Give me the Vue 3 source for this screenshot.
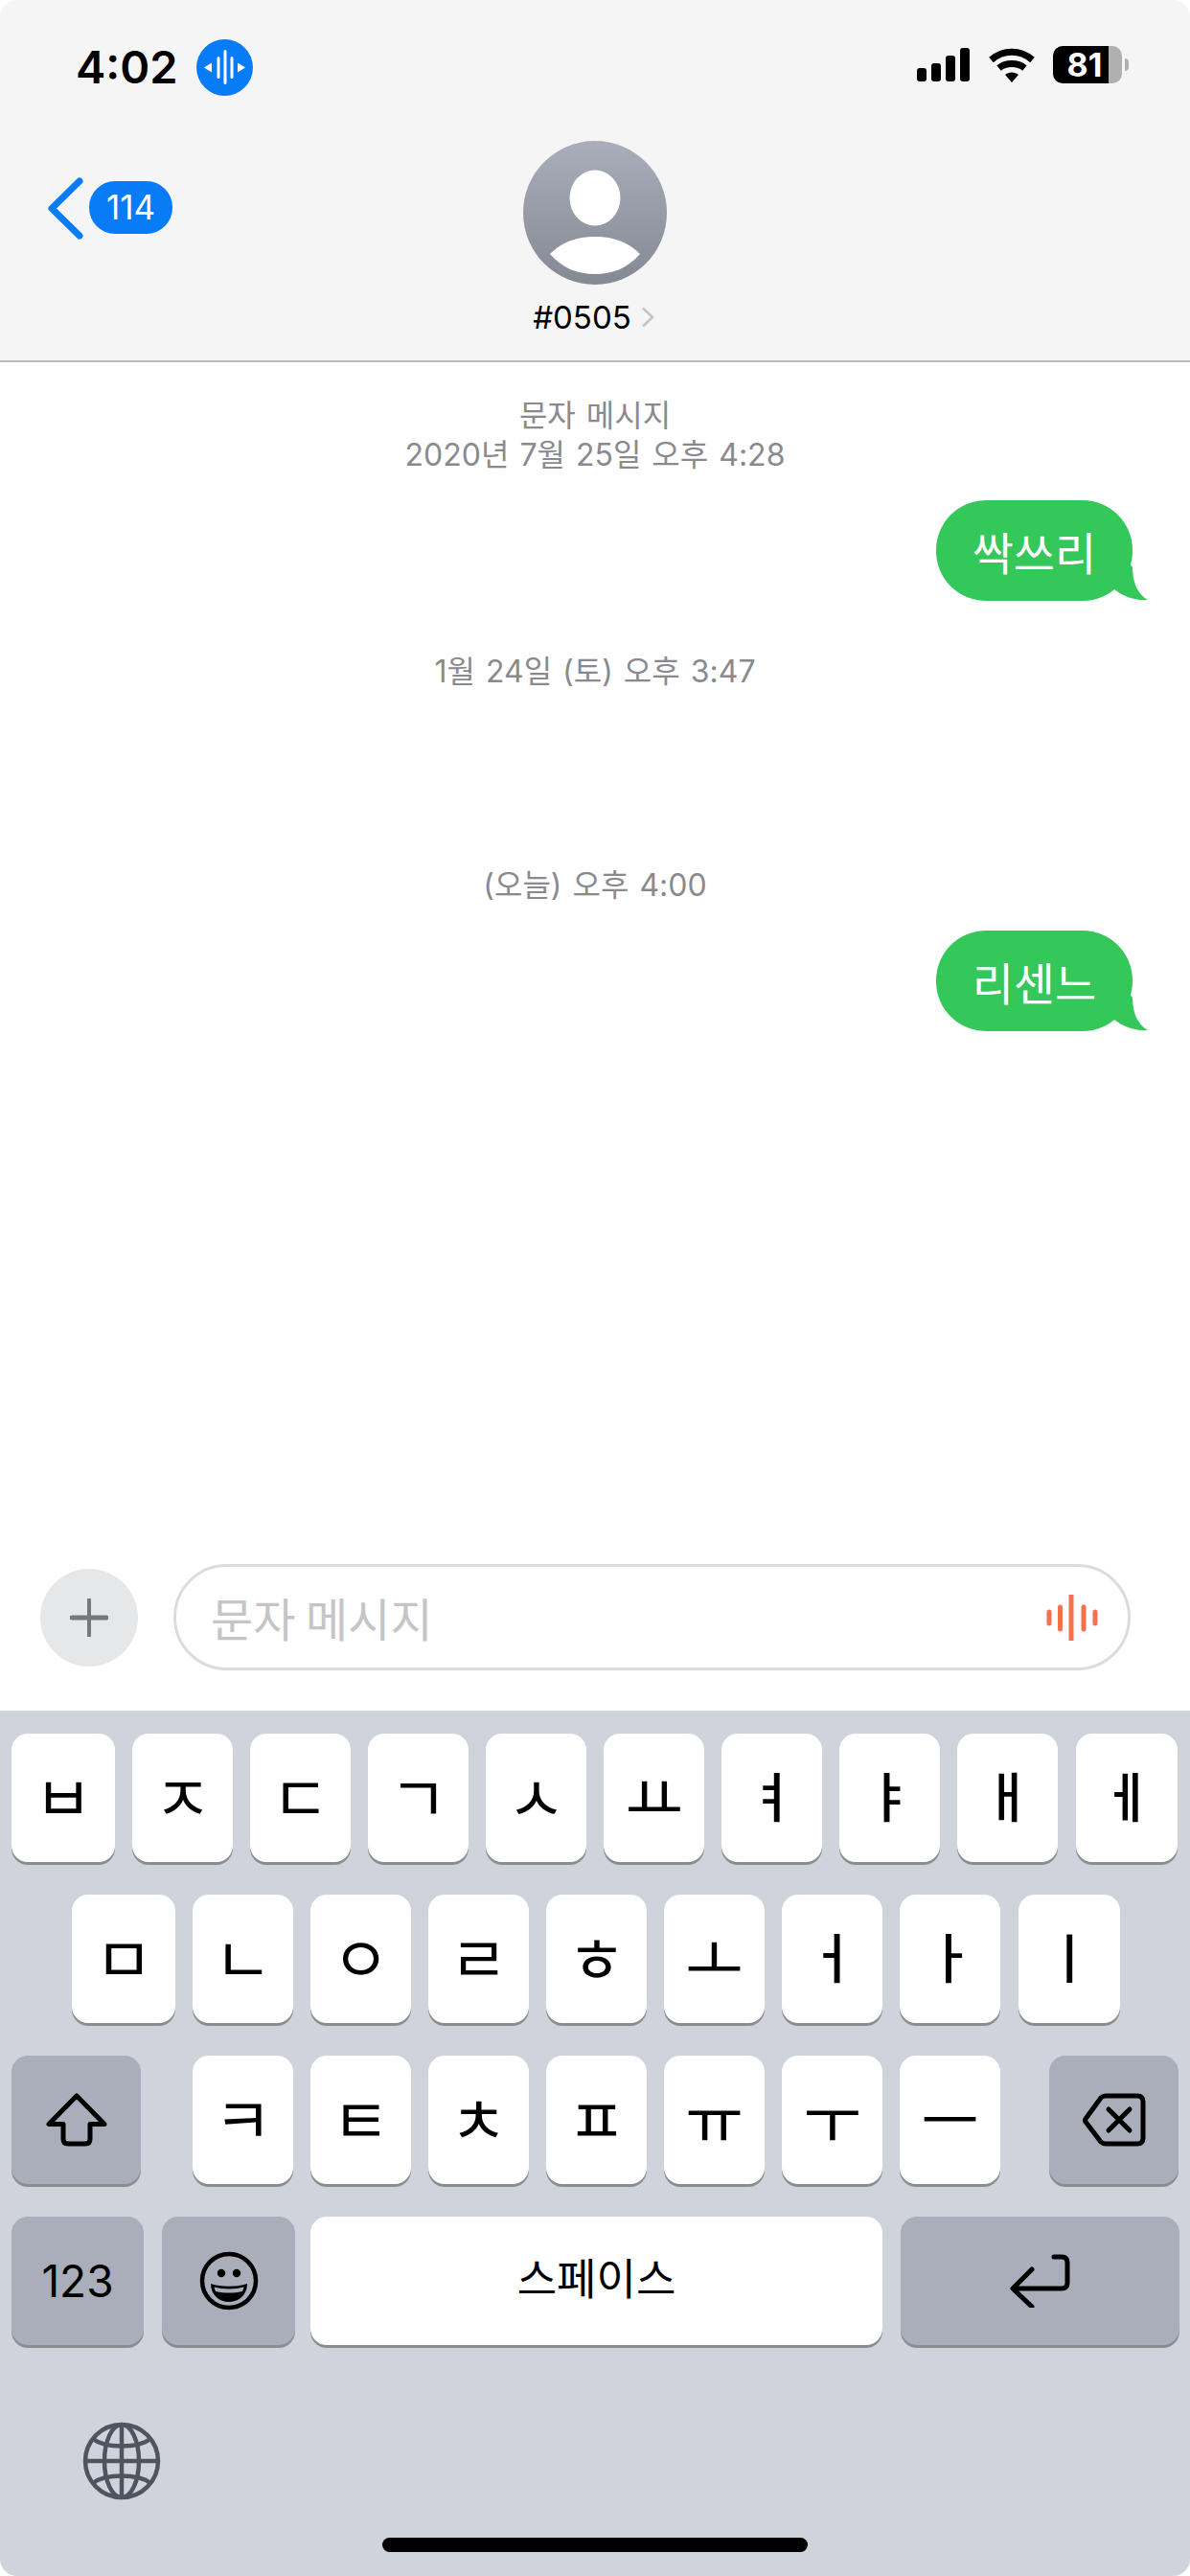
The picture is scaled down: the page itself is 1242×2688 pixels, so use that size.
<template>
  <div class="phone">
    <header class="top">
      <div class="status">
        <div class="status-left">
          <span class="clock">4:02</span>
          <svg class="voice" width="59" height="59" viewBox="0 0 59 59">
            <circle cx="29.5" cy="29.5" r="29.5" fill="#087cf6" />
            <path d="M16 24.5v10l-8-5z M43 24.5v10l8-5z" fill="#fff" />
            <path d="M23 19.5v20 M30 12.5v33 M37 19.5v20" stroke="#fff" stroke-width="3" stroke-linecap="round" />
          </svg>
        </div>
        <div class="status-right">
          <svg class="signal" width="55" height="35" viewBox="0 0 55 35">
            <rect x="0" y="21" width="10" height="14" rx="3" />
            <rect x="15" y="16" width="10" height="19" rx="3" />
            <rect x="30" y="8" width="10" height="27" rx="3" />
            <rect x="45" y="0" width="10" height="35" rx="3" />
          </svg>
          <svg class="wifi" width="48" height="37" viewBox="0 0 48 37">
            <path d="M2.5 13.5C15 2.5 33 2.5 45.500 13.500" fill="none" stroke="#000" stroke-width="7" />
            <path d="M10.500 22C18 16 30 16 37.500 22" fill="none" stroke="#000" stroke-width="7" />
            <path d="M17 29L24 37L31 29C27 25.500 21 25.500 17 29Z" />
          </svg>
          <div class="battery">
            <div class="battery-body">
              <span class="battery-num">81</span>
            </div>
            <i class="battery-cap"></i>
          </div>
        </div>
      </div>
      <div class="nav">
        <div class="back">
          <svg width="38" height="66" viewBox="0 0 38 66">
            <path d="M33 4L4 32.500L33 61" fill="none" stroke="#087cf6" stroke-width="7" stroke-linecap="round" stroke-linejoin="round" />
          </svg>
          <span class="badge">114</span>
        </div>
        <div class="contact">
          <svg class="avatar" width="150" height="150" viewBox="0 0 150 150">
            <defs>
              <linearGradient id="av" x1="0" y1="0" x2="0" y2="1">
                <stop offset="0" stop-color="#a9aeba" />
                <stop offset="1" stop-color="#858994" />
              </linearGradient>
            </defs>
            <circle cx="75" cy="75" r="75" fill="url(#av)" />
            <ellipse cx="75" cy="59.500" rx="26.500" ry="29" fill="#fff" />
            <path d="M28 118C42 104 58 100 75 100C92 100 108 104 122 118C109 133 93 139 75 139C57 139 41 133 28 118Z" fill="#fff" />
          </svg>
          <div class="contact-name">
            <span>#0505</span>
            <svg width="14" height="22" viewBox="0 0 14 22">
              <path d="M2 1.500L12 11L2 20.500" fill="none" stroke="#c4c4c6" stroke-width="2.500" />
            </svg>
          </div>
        </div>
        <div></div>
      </div>
    </header>

    <main class="thread">
      <template v-for="(item, i) in thread" :key="i">
        <div class="stamp" :class="item.cls">
          <div v-for="line in item.stamp" :key="line">{{ line }}</div>
        </div>
        <div v-if="item.text" class="bubble">
          <span>{{ item.text }}</span>
          <svg class="tail" width="60" height="60" viewBox="0 0 60 60">
            <path d="M40 20L44 25C44 40 49 53 60 59C46 60 34 55 25 48Z" fill="#34c759" />
          </svg>
        </div>
      </template>
    </main>

    <div class="composer">
      <div class="plus">
        <svg width="40" height="40" viewBox="0 0 40 40">
          <path d="M20 1v38" stroke="#77787d" stroke-width="4" stroke-linecap="round" />
          <path d="M2 20h36" stroke="#77787d" stroke-width="5" stroke-linecap="round" />
        </svg>
      </div>
      <div class="field">
        <span class="placeholder">문자 메시지</span>
        <svg class="wave" width="56" height="48" viewBox="0 0 56 48">
          <path d="M4 18v12 M15.500 13v23 M27 1v46 M40 13v23 M52 18v12" stroke="#f4714e" stroke-width="5" stroke-linecap="round" />
        </svg>
      </div>
    </div>

    <section class="keyboard">
      <div class="row row-1">
        <div v-for="k in row1" :key="k" class="key" :class="jamoClass(k)">{{ k }}</div>
      </div>
      <div class="row row-2">
        <div v-for="k in row2" :key="k" class="key" :class="jamoClass(k)">{{ k }}</div>
      </div>
      <div class="row row-3">
        <div class="key dark shift">
          <svg width="64" height="56" viewBox="0 0 64 56">
            <path d="M32 3L3 32.500H18V48Q18 53 23 53H41Q46 53 46 48V32.500H61Z" fill="none" stroke="#000" stroke-width="5" stroke-linejoin="round" />
          </svg>
        </div>
        <div v-for="k in row3" :key="k" class="key" :class="jamoClass(k)">{{ k }}</div>
        <div class="key dark del">
          <svg width="66" height="56" viewBox="0 0 66 56">
            <path d="M3 27L19 5Q21 3 24 3H57Q63 3 63 9V47Q63 53 57 53H24Q21 53 19 51L3 30Q2 28.500 3 27Z" fill="none" stroke="#000" stroke-width="5" stroke-linejoin="round" />
            <path d="M27 17L49 39 M49 17L27 39" stroke="#000" stroke-width="5" stroke-linecap="round" />
          </svg>
        </div>
      </div>
      <div class="row row-4">
        <div class="key dark num">123</div>
        <div class="key dark emoji">
          <svg width="62" height="62" viewBox="0 0 62 62">
            <circle cx="31" cy="31" r="28" fill="none" stroke="#000" stroke-width="4.500" />
            <circle cx="23" cy="23" r="4.200" />
            <circle cx="39" cy="23" r="4.200" />
            <path d="M12 34C22 37.500 40 37.500 50 34C50 46 41 53 31 53C21 53 12 46 12 34Z" />
            <path d="M15.500 37.500C25 40 37 40 46.500 37.500C46 40 45.500 41 44.800 42C36 44 26 44 17.200 42C16.500 41 16 40 15.500 37.500Z" fill="#a9aeba" />
          </svg>
        </div>
        <div class="key space"><span>스페이스</span></div>
        <div class="key dark enter">
          <svg width="64" height="56" viewBox="0 0 64 56">
            <path d="M46 3H54Q60 3 60 9V30Q60 36 54 36H4 M23 16L3 36L23 55" fill="none" stroke="#000" stroke-width="5" stroke-linecap="round" stroke-linejoin="round" />
          </svg>
        </div>
      </div>
      <svg class="globe" width="82" height="82" viewBox="0 0 82 82">
        <g fill="none" stroke="#50545e" stroke-width="4.500">
          <circle cx="41" cy="41" r="38" />
          <ellipse cx="41" cy="41" rx="18" ry="38" />
          <path d="M41 3v76 M3 41h76" />
          <path d="M11 18C24 28 58 28 71 18 M11 64C24 54 58 54 71 64" />
        </g>
      </svg>
      <div class="home-bar"></div>
    </section>
  </div>
</template>

<script setup>
// 말풍선 사이 빈 간격은 cls 로 조정
const thread = [
  { stamp: ['문자 메시지', '2020년 7월 25일 오후 4:28'], text: '싹쓰리', cls: 'first' },
  { stamp: ['1월 24일 (토) 오후 3:47'], cls: 'second' },
  { stamp: ['(오늘) 오후 4:00'], text: '리센느', cls: 'third' }
]

const row1 = ['ㅂ', 'ㅈ', 'ㄷ', 'ㄱ', 'ㅅ', 'ㅛ', 'ㅕ', 'ㅑ', 'ㅐ', 'ㅔ']
const row2 = ['ㅁ', 'ㄴ', 'ㅇ', 'ㄹ', 'ㅎ', 'ㅗ', 'ㅓ', 'ㅏ', 'ㅣ']
const row3 = ['ㅋ', 'ㅌ', 'ㅊ', 'ㅍ', 'ㅠ', 'ㅜ', 'ㅡ']

// 세로 모음은 자음보다 글리프가 길어서 크기를 따로 둔다
const tallVowels = 'ㅕㅑㅐㅔㅓㅏㅣ'
const jamoClass = (k) => (tallVowels.includes(k) ? 'tall' : 'wide')
</script>

<style>
html, body {
  margin: 0;
  background: #fff;
}
</style>

<style scoped>
.phone {
  width: 1242px;
  height: 2688px;
  display: flex;
  flex-direction: column;
  overflow: hidden;
  background: #fff;
  border-radius: 18px;
  font-family: "Noto Sans CJK KR", "Noto Sans", sans-serif;
  color: #000;
}

/* 상단 */
.top {
  height: 376px;
  flex-shrink: 0;
  background: #f5f5f6;
  border-bottom: 2px solid #b9b9bb;
}

.status {
  height: 147px;
  display: flex;
  justify-content: space-between;
  align-items: flex-start;
  padding: 0 64px 0 79px;
  box-sizing: border-box;
}

.status-left {
  display: flex;
  align-items: center;
  gap: 19px;
  padding-top: 41px;
}

.clock {
  margin-top: -2px;
  font-family: Inter, "Liberation Sans", sans-serif;
  font-size: 47px;
  font-weight: 600;
  line-height: 59px;
}

.status-right {
  display: flex;
  align-items: flex-start;
  padding-top: 48px;
}

.signal {
  margin: 2px 20px 0 0;
}

.wifi {
  margin: 1px 19px 0 0;
}

.battery {
  display: flex;
  align-items: center;
  gap: 3px;
}

.battery-body {
  width: 72px;
  height: 39px;
  border-radius: 10px;
  background: linear-gradient(90deg, #000 58px, #b0b0b2 58px);
  display: flex;
  align-items: center;
}

.battery-num {
  width: 58px;
  text-align: center;
  padding-left: 8px;
  box-sizing: border-box;
  font-family: Inter, "Liberation Sans", sans-serif;
  font-size: 34px;
  font-weight: 700;
  line-height: 39px;
  color: #fff;
}

.battery-cap {
  display: block;
  width: 4px;
  height: 13px;
  border-radius: 0 4px 4px 0;
  background: #b0b0b2;
}

.nav {
  display: grid;
  grid-template-columns: 1fr auto 1fr;
}

.back {
  display: flex;
  align-items: flex-start;
  padding: 38px 0 0 50px;
  gap: 5px;
}

.badge {
  width: 87px;
  height: 55px;
  margin-top: 4px;
  border-radius: 27px;
  background: #087cf6;
  color: #fff;
  font-family: Inter, "Liberation Sans", sans-serif;
  font-size: 35px;
  line-height: 55px;
  text-align: center;
}

.contact {
  display: flex;
  flex-direction: column;
  align-items: center;
}

.avatar {
  display: block;
}

.contact-name {
  display: flex;
  align-items: center;
  gap: 10px;
  margin: 14px 3px 0 0;
  font-family: Inter, "Liberation Sans", sans-serif;
  font-size: 33px;
  line-height: 40px;
}

/* 대화 */
.thread {
  flex: 1;
  display: flex;
  flex-direction: column;
  padding: 35px 44px 0 0;
  box-sizing: border-box;
}

.stamp {
  margin-right: -44px;
  text-align: center;
  font-family: Inter, "Noto Sans CJK KR", sans-serif;
  font-size: 32px;
  word-spacing: 2px;
  line-height: 41px;
  color: #8a8a8e;
}

.stamp.second {
  margin-top: 53px;
}

.stamp.third {
  margin-top: 182px;
}

.bubble {
  position: relative;
  align-self: flex-end;
  width: 205px;
  height: 105px;
  margin-top: 27px;
  margin-right: 16px;
  border-radius: 52px;
  background: #34c759;
  color: #fff;
  font-size: 47px;
  line-height: 105px;
  text-align: center;
}

.tail {
  position: absolute;
  right: -16px;
  bottom: 0;
}

/* 입력창 */
.composer {
  display: flex;
  align-items: center;
  gap: 37px;
  padding: 0 62px 42px 42px;
}

.plus {
  width: 102px;
  height: 102px;
  border-radius: 50%;
  background: #e6e7e9;
  display: flex;
  align-items: center;
  justify-content: center;
}

.field {
  flex: 1;
  height: 111px;
  box-sizing: border-box;
  border: 3px solid #dcdcde;
  border-radius: 56px;
  display: flex;
  align-items: center;
  justify-content: space-between;
  padding: 0 30px 0 36px;
}

.placeholder {
  margin-top: -2px;
  font-size: 48px;
  color: #c5c5c7;
}

/* 키보드 */
.keyboard {
  height: 903px;
  flex-shrink: 0;
  box-sizing: border-box;
  background: #d0d3dc;
  padding-top: 24px;
  display: flex;
  flex-direction: column;
}

.row {
  display: flex;
  gap: 18px;
  height: 134px;
  margin-bottom: 34px;
}

.row-1,
.row-3,
.row-4 {
  padding-left: 12px;
}

.row-2 {
  padding-left: 75px;
}

.key {
  width: 105px;
  height: 134px;
  box-sizing: border-box;
  flex-shrink: 0;
  background: #fff;
  border-radius: 17px;
  box-shadow: 0 3px 0 #8b8c90;
  display: flex;
  align-items: center;
  justify-content: center;
  font-size: 54px;
  line-height: 1;
}

.key.wide {
  padding-bottom: 8px;
  font-size: 66px;
}

.key.tall {
  padding-bottom: 8px;
  font-size: 56px;
  font-weight: 500;
}

.row-1 .key:first-child,
.row-2 .key:first-child {
  width: 108px;
}

.row-1 .key:last-child,
.row-2 .key:last-child {
  width: 106px;
  margin-left: 1px;
}

.key.dark {
  background: #a9aeba;
}

.key.shift {
  width: 135px;
  margin-right: 36px;
}

.key.del {
  width: 135px;
  margin-left: 33px;
}

.key.num {
  width: 138px;
  font-family: Inter, "Liberation Sans", sans-serif;
  font-size: 46px;
}

.key.emoji {
  width: 139px;
  margin-left: 1px;
  margin-right: -2px;
}

.key.space {
  width: 597px;
  font-size: 45px;
}

.key.space span {
  margin-top: -10px;
}

.key.enter {
  width: 291px;
  margin-left: 1px;
}

.globe {
  margin: 46px 0 0 86px;
}

.home-bar {
  align-self: center;
  width: 444px;
  height: 15px;
  margin-top: 39px;
  border-radius: 8px;
  background: #000;
}
</style>
